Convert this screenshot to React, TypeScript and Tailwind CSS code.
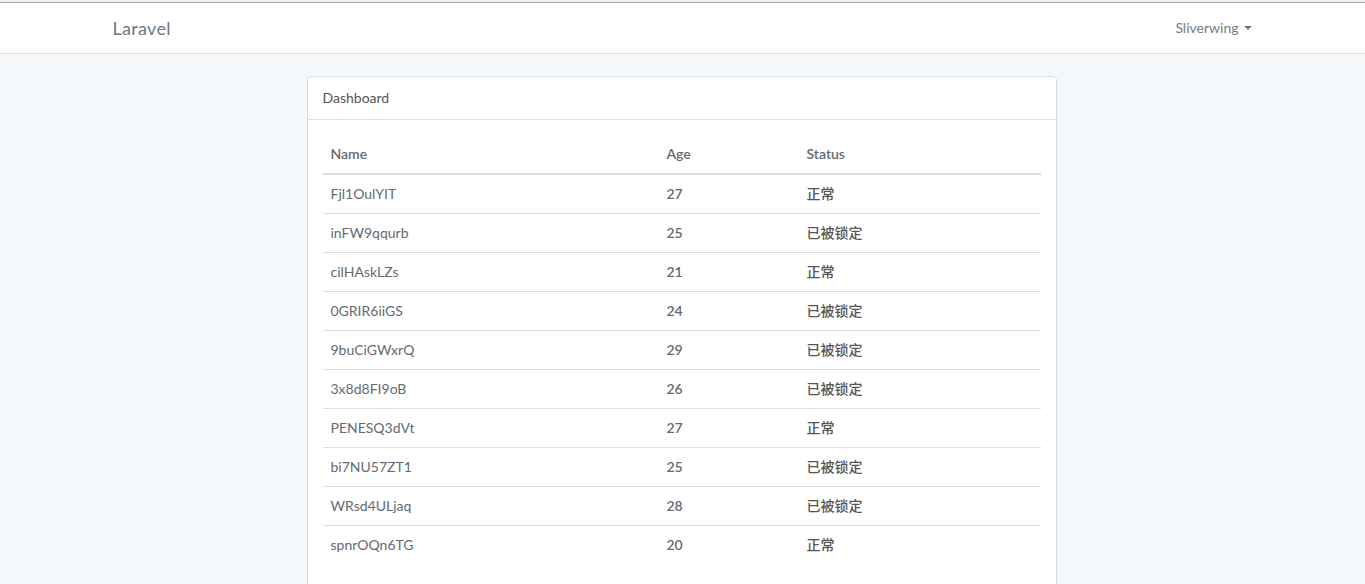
const users = [
  { name: "Fjl1OulYIT", age: 27, status: "正常" },
  { name: "inFW9qqurb", age: 25, status: "已被锁定" },
  { name: "cilHAskLZs", age: 21, status: "正常" },
  { name: "0GRIR6iiGS", age: 24, status: "已被锁定" },
  { name: "9buCiGWxrQ", age: 29, status: "已被锁定" },
  { name: "3x8d8FI9oB", age: 26, status: "已被锁定" },
  { name: "PENESQ3dVt", age: 27, status: "正常" },
  { name: "bi7NU57ZT1", age: 25, status: "已被锁定" },
  { name: "WRsd4ULjaq", age: 28, status: "已被锁定" },
  { name: "spnrOQn6TG", age: 20, status: "正常" },
];

export default function App() {
  return (
    <div
      className="min-h-screen bg-[#f5f8fa] text-[14px] leading-[1.6] text-[#636b6f]"
      style={{ fontFamily: 'Lato, "Noto Sans CJK SC", sans-serif' }}
    >
      {/* window edge */}
      <div className="h-[2px] bg-[#f0f0f0]" />
      <div className="h-px bg-[#adadad]" />

      {/* Navbar */}
      <nav className="h-[51px] bg-white border-b border-[#d3e0e9]">
        <div className="mx-auto w-[1170px] px-[15px] h-full flex items-center justify-between">
          <span className="text-[18px] text-[#6d7885] tracking-[0.3px]">Laravel</span>
          <span className="flex items-center gap-[5px] text-[14px] text-[#7a7a7a] pr-[1px]">
            Sliverwing
            <svg width="8" height="4" viewBox="0 0 8 4" className="mt-[1px]">
              <path d="M0 0h8L4 4z" fill="#777" />
            </svg>
          </span>
        </div>
      </nav>

      <div className="mx-auto w-[1170px] pt-[22px] pr-[2px] flex justify-center">
        <div className="w-[750px] bg-white border border-[#d3e0e9] rounded-[4px]">
          <div className="px-[15px] py-[10px] border-b border-[#d3e0e9] text-[#555]">Dashboard</div>
          <div className="p-[15px]">
            <table className="w-full border-collapse leading-[22px] mb-[22px]">
              <thead>
                <tr className="border-b-2 border-[#ddd]">
                  <th className="text-left font-semibold p-[8px] w-[336px]">Name</th>
                  <th className="text-left font-semibold p-[8px] w-[140px]">Age</th>
                  <th className="text-left font-semibold p-[8px]">Status</th>
                </tr>
              </thead>
              <tbody>
                {users.map((u, i) => (
                  <tr key={u.name} className={i < users.length - 1 ? "border-b border-[#ddd]" : ""}>
                    <td className="p-[8px]">{u.name}</td>
                    <td className="p-[8px] font-semibold">{u.age}</td>
                    <td className="p-[8px] font-medium text-[#555]">{u.status}</td>
                  </tr>
                ))}
              </tbody>
            </table>
          </div>
        </div>
      </div>
    </div>
  );
}
